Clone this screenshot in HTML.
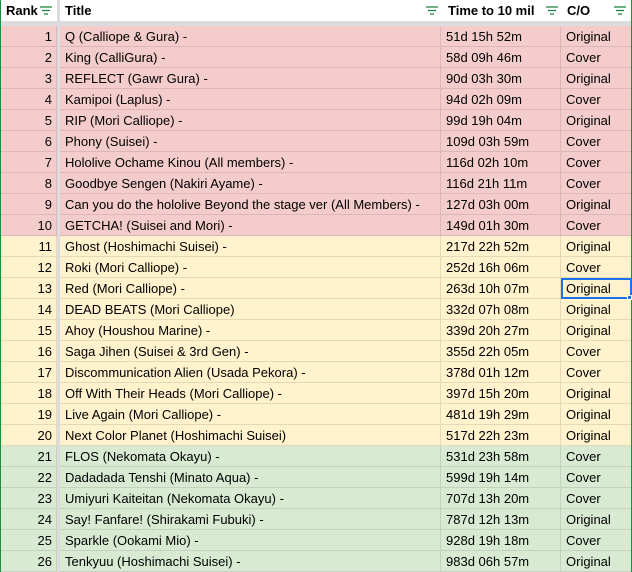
<!DOCTYPE html>
<html><head><meta charset="utf-8"><style>
*{margin:0;padding:0;box-sizing:border-box}
body{width:632px;height:572px;overflow:hidden;background:#fff;font-family:"Liberation Sans",Arial,sans-serif;font-size:13px;color:#000;position:relative}
.hdr{position:absolute;top:0;left:0;width:632px;height:21px;background:#fff;font-weight:bold}
.bar{position:absolute;top:21px;left:0;width:632px;height:5px;background:#dadce0}
.vbar{position:absolute;top:0;left:57px;width:3px;height:572px;background:#dadce0}
.c{position:absolute;height:21px;line-height:21px;white-space:nowrap;overflow:hidden}
.row{position:absolute;left:0;width:632px;height:21px}
.row div{position:absolute;top:0;height:21px;line-height:21px;border-right:1px solid rgba(0,0,0,.1);border-bottom:1px solid rgba(0,0,0,.1);white-space:nowrap;overflow:hidden;padding-left:5px}
.p{background:#f4cccc}.y{background:#fff2cc}.g{background:#d9ead3}
.f{position:absolute;top:6px;width:12px;height:9px}
.lb{position:absolute;top:0;width:1px;height:572px;background:#1e8e3e}
</style></head><body>
<div class="hdr">
<div class="c" style="left:6px">Rank</div>
<svg class="f" style="left:40px" viewBox="0 0 12 9"><path d="M0 1h12M2 4.5h8M4 8h4" stroke="#188038" stroke-width="1.3"/></svg>
<div class="c" style="left:65px">Title</div>
<svg class="f" style="left:426px" viewBox="0 0 12 9"><path d="M0 1h12M2 4.5h8M4 8h4" stroke="#188038" stroke-width="1.3"/></svg>
<div class="c" style="left:448px">Time to 10 mil</div>
<svg class="f" style="left:546px" viewBox="0 0 12 9"><path d="M0 1h12M2 4.5h8M4 8h4" stroke="#188038" stroke-width="1.3"/></svg>
<div class="c" style="left:567px">C/O</div>
<svg class="f" style="left:614px" viewBox="0 0 12 9"><path d="M0 1h12M2 4.5h8M4 8h4" stroke="#188038" stroke-width="1.3"/></svg>
</div>
<div id="rows"></div>
<div class="bar"></div>
<div class="vbar"></div>
<div class="lb" style="left:0"></div>
<div class="lb" style="left:631px"></div>
<div style="position:absolute;left:561px;top:278px;width:71px;height:21px;border:2px solid #1a73e8"></div>
<div style="position:absolute;left:627px;top:295px;width:5px;height:5px;background:#1a73e8;border:1px solid #fff"></div>
<script>
var d=[["Q (Calliope & Gura) -","51d 15h 52m","Original"],["King (CalliGura) -","58d 09h 46m","Cover"],["REFLECT (Gawr Gura) -","90d 03h 30m","Original"],["Kamipoi (Laplus) -","94d 02h 09m","Cover"],["RIP (Mori Calliope) -","99d 19h 04m","Original"],["Phony (Suisei) -","109d 03h 59m","Cover"],["Hololive Ochame Kinou (All members) -","116d 02h 10m","Cover"],["Goodbye Sengen (Nakiri Ayame) -","116d 21h 11m","Cover"],["Can you do the hololive Beyond the stage ver (All Members) -","127d 03h 00m","Original"],["GETCHA! (Suisei and Mori) -","149d 01h 30m","Cover"],["Ghost (Hoshimachi Suisei) -","217d 22h 52m","Original"],["Roki (Mori Calliope) -","252d 16h 06m","Cover"],["Red (Mori Calliope) -","263d 10h 07m","Original"],["DEAD BEATS (Mori Calliope)","332d 07h 08m","Original"],["Ahoy (Houshou Marine) -","339d 20h 27m","Original"],["Saga Jihen (Suisei & 3rd Gen) -","355d 22h 05m","Cover"],["Discommunication Alien (Usada Pekora) -","378d 01h 12m","Cover"],["Off With Their Heads (Mori Calliope) -","397d 15h 20m","Original"],["Live Again (Mori Calliope) -","481d 19h 29m","Original"],["Next Color Planet (Hoshimachi Suisei)","517d 22h 23m","Original"],["FLOS (Nekomata Okayu) -","531d 23h 58m","Cover"],["Dadadada Tenshi (Minato Aqua) -","599d 19h 14m","Cover"],["Umiyuri Kaiteitan (Nekomata Okayu) -","707d 13h 20m","Cover"],["Say! Fanfare! (Shirakami Fubuki) -","787d 12h 13m","Original"],["Sparkle (Ookami Mio) -","928d 19h 18m","Cover"],["Tenkyuu (Hoshimachi Suisei) -","983d 06h 57m","Original"]];
var h="";d.forEach(function(r,i){var c=i<10?"p":i<20?"y":"g";h+='<div class="row '+c+'" style="top:'+(26+i*21)+'px"><div style="left:0;width:57px;text-align:right;padding-right:4px">'+(i+1)+'</div><div style="left:60px;width:381px">'+r[0].replace(/&/g,"&amp;")+'</div><div style="left:441px;width:120px">'+r[1]+'</div><div style="left:561px;width:71px">'+r[2]+'</div></div>';});
document.getElementById("rows").innerHTML=h;
</script>
</body></html>
